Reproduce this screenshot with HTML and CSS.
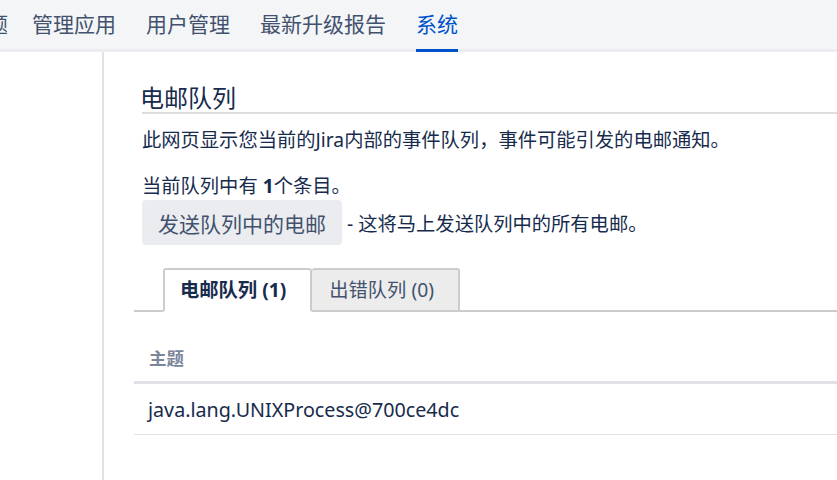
FILE: index.html
```html
<!DOCTYPE html>
<html lang="zh-CN">
<head>
  <meta charset="UTF-8" />
  <meta name="viewport" content="width=device-width, initial-scale=1" />
  <title>电邮队列 - 系统</title>

  <link rel="stylesheet" href="styles.css">
</head>

<body>
  <div class="admin-nav">
    <ul class="nav-list">
      <li class="nav-item first">问题</li>
      <li class="nav-item">管理应用</li>
      <li class="nav-item">用户管理</li>
      <li class="nav-item">最新升级报告</li>
      <li class="nav-item active">系统</li>
    </ul>
  </div>

  <div class="page">
    <div class="sidebar"></div>

    <div class="content">
      <h2 class="page-title">电邮队列</h2>
      <p class="intro">此网页显示您当前的Jira内部的事件队列，事件可能引发的电邮通知。</p>
      <p class="count">当前队列中有 <b>1</b>个条目。</p>

      <div class="send-row">
        <button class="send-button">发送队列中的电邮</button>
        <span class="send-note">- 这将马上发送队列中的所有电邮。</span>
      </div>

      <div class="queue">
        <ul class="tabs">
          <li class="tab active">电邮队列 (1)</li>
          <li class="tab">出错队列 (0)</li>
        </ul>

        <table class="mail-table">
          <thead>
            <tr><th>主题</th></tr>
          </thead>
          <tbody>
            <tr><td>java.lang.UNIXProcess@700ce4dc</td></tr>
          </tbody>
        </table>
      </div>
    </div>
  </div>
</body>
</html>
```

FILE: styles.css
```css
* {
  box-sizing: border-box;
  margin: 0;
  padding: 0;
}

html, body {
  margin: 0;
  background: white;
  font-family: "Noto Sans", "Noto Sans CJK SC", sans-serif;
  color: #172b4d;
  height: 100%;
  overflow: hidden;
}

body {
  display: flex;
  flex-direction: column;
}

.admin-nav {
  background: #f4f5f7;
  border-bottom: 3px solid #ebecf0;
  height: 52px;
  flex-shrink: 0;
}

.nav-list {
  list-style: none;
  display: flex;
  gap: 30px;
  margin-left: -34px;
}

.nav-item {
  font-size: 21px;
  line-height: 49px;
  height: 52px;
  color: #42526e;
  border-bottom: 3px solid transparent;
  white-space: nowrap;
}

.nav-item.first {
  margin-right: -6px;
}

.nav-item.active {
  color: #0052cc;
  border-bottom-color: #0052cc;
}

.page {
  display: flex;
  flex: 1;
}

.sidebar {
  width: 104px;
  flex-shrink: 0;
  border-right: 2px solid #e1e2e8;
}

.content {
  flex: 1;
  padding: 32px 0 0 38px;
  min-width: 0;
}

.page-title {
  font-size: 24px;
  line-height: 28px;
  font-weight: normal;
  color: #172b4d;
  border-bottom: 2px solid #dddddd;
  text-indent: -2px;
}

.intro,
.count {
  font-size: 19.3px;
  line-height: 24px;
}

.intro {
  margin-top: 14px;
}

.count {
  margin-top: 22px;
}

.count b {
  font-weight: bold;
}

.send-row {
  display: flex;
  align-items: center;
  margin-top: 2px;
}

.send-button {
  font-family: inherit;
  font-size: 21px;
  height: 45px;
  padding: 0 16px;
  background: #ebecf0;
  color: #42526e;
  border: none;
  border-radius: 4px;
}

.send-note {
  font-size: 19.3px;
  margin-left: 5px;
}

.queue {
  margin-left: -8px;
  margin-top: 23px;
}

.tabs {
  list-style: none;
  display: flex;
  padding-left: 29px;
  border-bottom: 2px solid #cccccc;
}

.tab {
  font-size: 19.3px;
  line-height: 40px;
  padding: 0 24px 0 15px;
  border: 2px solid #cccccc;
  border-radius: 3px 3px 0 0;
  margin-bottom: -2px;
  background: #ececec;
  color: #42526e;
}

.tab + .tab {
  border-left: none;
  padding-left: 17px;
}

.tab.active {
  background: white;
  border-bottom-color: white;
  font-weight: bold;
  color: #172b4d;
}

.mail-table {
  width: 100%;
  border-collapse: collapse;
  margin-top: 22px;
}

.mail-table th {
  text-align: left;
  font-size: 17.5px;
  font-weight: bold;
  color: #7a869a;
  height: 48px;
  padding: 0 15px;
  border-bottom: 3px solid #dfe1e6;
}

.mail-table td {
  font-size: 19.7px;
  line-height: 24px;
  padding: 14px 14px 12px;
  border-bottom: 1px solid #dfe1e6;
}
```
